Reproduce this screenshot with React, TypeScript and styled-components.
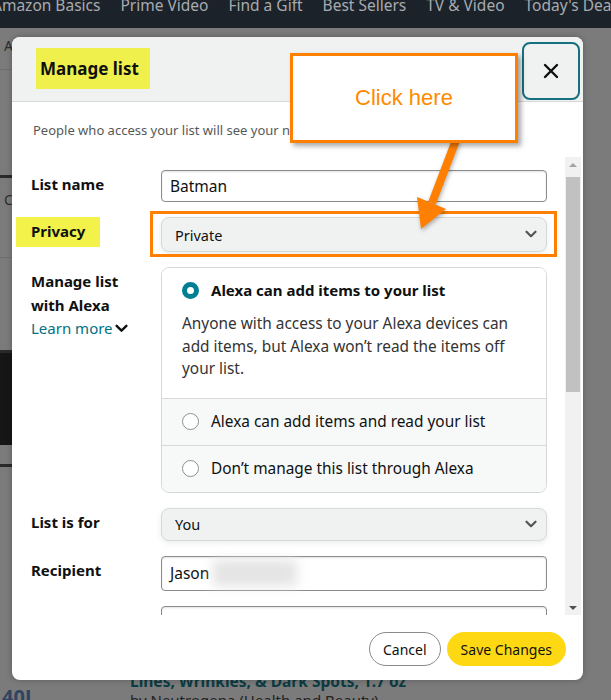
import styled, { createGlobalStyle } from 'styled-components'

const GlobalStyle = createGlobalStyle`
  html, body {
    margin: 0;
    padding: 0;
  }
  body {
    font-family: "Noto Sans", Arial, sans-serif;
    background: #7b7b7b;
  }
  * {
    box-sizing: border-box;
  }
`

const Page = styled.div`
  position: relative;
  width: 611px;
  height: 700px;
  overflow: hidden;
  background: #7b7b7b;
`

const NavBar = styled.div`
  height: 28px;
  background: #1c2229;
  display: flex;
  gap: 20px;
  overflow: hidden;
  white-space: nowrap;
`

const NavItem = styled.span`
  font-size: 15.5px;
  line-height: 16px;
  margin-top: -3px;
  color: #a7abb0;
  &:first-child {
    margin-left: -8px;
  }
`

const Backdrop = styled.div`
  display: flex;
  height: 672px;
`

const LeftRail = styled.div`
  width: 100px;
  display: flex;
  flex-direction: column;
`

const RailText = styled.div<{ $h: number; $top: number }>`
  height: ${(p) => p.$h}px;
  padding-top: ${(p) => p.$top}px;
  padding-left: 4px;
  font-size: 14px;
  color: #2d2d2d;
  border-bottom: 1px solid #6f6f6f;
`

const DarkBlock = styled.div<{ $h: number }>`
  height: ${(p) => p.$h}px;
  background: #161616;
`

const RailGap = styled.div<{ $h: number }>`
  height: ${(p) => p.$h}px;
  border-bottom: 3px solid #2a2a2a;
`

const RailBrand = styled.div`
  margin-top: auto;
  padding-left: 2px;
  font-size: 20px;
  font-weight: 700;
  color: #2f4462;
  line-height: 22px;
  margin-bottom: -8px;
`

const MainCol = styled.div`
  flex: 1;
  display: flex;
  flex-direction: column;
  justify-content: flex-end;
  padding-left: 30px;
  margin-bottom: -10px;
`

const ProductTitle = styled.div`
  font-size: 15.5px;
  font-weight: 700;
  color: #0c3c43;
  line-height: 19px;
`

const ProductBy = styled.div`
  font-size: 15px;
  color: #222;
  line-height: 19px;
`

const Modal = styled.div`
  position: absolute;
  left: 12px;
  top: 37px;
  width: 571px;
  height: 643px;
  background: #fff;
  border-radius: 8px;
  box-shadow: 0 0 6px rgba(0, 0, 0, 0.25);
  display: flex;
  flex-direction: column;
  overflow: hidden;
  color: #0f1111;
`

const Header = styled.div`
  height: 65px;
  flex-shrink: 0;
  background: #f0f2f2;
  border-bottom: 1px solid #d5d9d9;
  display: flex;
  justify-content: space-between;
  align-items: flex-start;
  padding: 0 3px 0 24px;
`

const Title = styled.h2`
  margin: 11px 0 0;
  height: 41px;
  line-height: 41px;
  padding: 0 11px 0 4px;
  background: #eff04b;
  font-size: 17px;
  font-weight: 700;
`

const CloseButton = styled.button`
  margin-top: 5px;
  width: 58px;
  height: 58px;
  border: 2px solid #17707f;
  border-radius: 8px;
  background: #f0f2f2;
  display: flex;
  align-items: center;
  justify-content: center;
  padding: 0;
`

const Subtitle = styled.p`
  margin: 0;
  padding: 19px 21px 0;
  font-size: 13px;
  line-height: 18px;
  color: #565959;
  white-space: nowrap;
`

const ScrollArea = styled.div`
  flex: 1;
  margin: 18px 2px 0 0;
  display: flex;
  min-height: 0;
`

const ScrollContent = styled.div`
  flex: 1;
  overflow: hidden;
  padding: 13px 18px 0 19px;
`

const FormGrid = styled.div`
  display: grid;
  grid-template-columns: 130px 386px;
  row-gap: 15px;
`

const Label = styled.div`
  width: 110px;
  padding-top: 3px;
  font-size: 15px;
  font-weight: 700;
  line-height: 23.5px;
`

const Highlight = styled.span`
  display: inline-block;
  margin-left: -15px;
  padding: 3px 15px 4px;
  line-height: 23px;
  margin-top: -3px;
  background: #f2f24a;
`

const LearnMore = styled.a`
  display: inline-flex;
  align-items: center;
  gap: 2px;
  font-weight: 400;
  color: #007185;
  text-decoration: none;
`

const TextInput = styled.div<{ $h: number }>`
  height: ${(p) => p.$h}px;
  border: 1px solid #888c8c;
  border-radius: 4px;
  box-shadow: inset 0 1px 2px rgba(15, 17, 17, 0.12);
  display: flex;
  align-items: center;
  padding-left: 8px;
  font-size: 15.5px;
  background: #fff;
`

const Blur = styled.span`
  display: inline-block;
  width: 84px;
  height: 26px;
  margin-left: 4px;
  background: #e4e4e4;
  filter: blur(6px);
`

const Select = styled.div<{ $h: number; $marked?: boolean }>`
  position: relative;
  height: ${(p) => p.$h}px;
  border: 1px solid #d5d9d9;
  border-radius: 8px;
  background: #f0f2f2;
  box-shadow: 0 2px 5px rgba(213, 217, 217, 0.5);
  display: flex;
  align-items: center;
  justify-content: space-between;
  padding: 0 9px 0 13px;
  font-size: 14.5px;
  &::after {
    content: '';
    display: ${(p) => (p.$marked ? 'block' : 'none')};
    position: absolute;
    inset: -7px -11px -6px -12px;
    border: 3px solid #ff8000;
  }
`

const RadioGroup = styled.div`
  border: 1px solid #d5d9d9;
  border-radius: 8px;
  overflow: hidden;
  font-size: 15.4px;
`

const SelectedOption = styled.div`
  padding: 11px 20px 17px;
  background: #fff;
`

const OptionRow = styled.div`
  display: flex;
  align-items: center;
  gap: 12px;
  line-height: 22px;
`

const OptionTitle = styled.span<{ $bold?: boolean }>`
  font-weight: ${(p) => (p.$bold ? 700 : 400)};
  font-size: ${(p) => (p.$bold ? '15px' : '15.4px')};
`

const Description = styled.p`
  margin: 12px 0 0;
  line-height: 22.5px;
  color: #333;
`

const Option = styled.div`
  height: 47px;
  border-top: 1px solid #d5d9d9;
  background: #f7f8f8;
  padding: 0 20px;
  display: flex;
  align-items: center;
  gap: 12px;
`

const Radio = styled.span<{ $checked?: boolean }>`
  width: 17px;
  height: 17px;
  flex-shrink: 0;
  border-radius: 50%;
  background: #fff;
  border: ${(p) => (p.$checked ? '5px solid #017f92' : '1px solid #8d9090')};
`

const Scrollbar = styled.div`
  width: 16px;
  background: #f1f1f1;
  display: flex;
  flex-direction: column;
  align-items: center;
`

const ScrollArrow = styled.div<{ $down?: boolean }>`
  height: 15px;
  width: 16px;
  display: flex;
  align-items: center;
  justify-content: center;
  margin-top: ${(p) => (p.$down ? 'auto' : '0')};
  &::before {
    content: '';
    border-left: 4px solid transparent;
    border-right: 4px solid transparent;
    ${(p) => (p.$down ? 'border-top: 4px solid #505050;' : 'border-bottom: 4px solid #a3a3a3;')}
  }
`

const Thumb = styled.div`
  margin-top: 5px;
  width: 14px;
  height: 215px;
  background: #c1c1c1;
`

const Footer = styled.div`
  height: 65px;
  flex-shrink: 0;
  display: flex;
  justify-content: flex-end;
  align-items: flex-start;
  gap: 6px;
  padding: 17px 17px 0 0;
`

const PillButton = styled.button<{ $primary?: boolean }>`
  height: 34px;
  border-radius: 17px;
  padding: 0 13px;
  font-family: inherit;
  font-size: 14px;
  color: #0f1111;
  border: ${(p) => (p.$primary ? '1px solid #ffd814' : '1px solid #888c8c')};
  background: ${(p) => (p.$primary ? '#ffd814' : '#fff')};
`

const Callout = styled.div`
  position: absolute;
  left: 290px;
  top: 53px;
  width: 228px;
  height: 90px;
  background: #fff;
  border: 3px solid #ff8000;
  box-shadow: 3px 3px 5px rgba(0, 0, 0, 0.35);
  display: flex;
  align-items: center;
  justify-content: center;
  font-family: "Liberation Sans", Arial, sans-serif;
  font-size: 22px;
  color: #ff8a00;
`

const ArrowSvg = styled.svg`
  position: absolute;
  left: 400px;
  top: 130px;
  filter: drop-shadow(1px 2px 2px rgba(0, 0, 0, 0.3));
`

function Chevron({ color = '#555', size = 12 }: { color?: string; size?: number }) {
  return (
    <svg width={size} height={size * 0.7} viewBox="0 0 12 8">
      <path d="M1.5 1.5 L6 6 L10.5 1.5" fill="none" stroke={color} strokeWidth="2.2" strokeLinecap="round" strokeLinejoin="round" />
    </svg>
  )
}

export default function App() {
  return (
    <Page>
      <GlobalStyle />
      <NavBar>
        <NavItem>Amazon Basics</NavItem>
        <NavItem>Prime Video</NavItem>
        <NavItem>Find a Gift</NavItem>
        <NavItem>Best Sellers</NavItem>
        <NavItem>TV &amp; Video</NavItem>
        <NavItem>Today's Deals</NavItem>
      </NavBar>

      <Backdrop>
        <LeftRail>
          <RailText $h={42} $top={8}>A</RailText>
          <RailGap $h={108} />
          <RailText $h={80} $top={12}>Create</RailText>
          <RailGap $h={95} />
          <DarkBlock $h={92} />
          <RailGap $h={22} />
          <RailBrand>40L</RailBrand>
        </LeftRail>
        <MainCol>
          <ProductTitle>Lines, Wrinkles, &amp; Dark Spots, 1.7 oz</ProductTitle>
          <ProductBy>by Neutrogena (Health and Beauty)</ProductBy>
        </MainCol>
      </Backdrop>

      <Modal>
        <Header>
          <Title>Manage list</Title>
          <CloseButton aria-label="Close">
            <svg width="16" height="16" viewBox="0 0 16 16">
              <path d="M2 2 L14 14 M14 2 L2 14" stroke="#0f1111" strokeWidth="2.4" strokeLinecap="round" />
            </svg>
          </CloseButton>
        </Header>
        <Subtitle>People who access your list will see your name and list name.</Subtitle>

        <ScrollArea>
          <ScrollContent>
            <FormGrid>
              <Label>List name</Label>
              <TextInput $h={32}>Batman</TextInput>

              <Label>
                <Highlight>Privacy</Highlight>
              </Label>
              <Select $h={35} $marked>
                Private
                <Chevron />
              </Select>

              <Label>
                Manage list with Alexa
                <br />
                <LearnMore href="#">
                  Learn more
                  <Chevron color="#0f1111" size={13} />
                </LearnMore>
              </Label>
              <RadioGroup>
                <SelectedOption>
                  <OptionRow>
                    <Radio $checked />
                    <OptionTitle $bold>Alexa can add items to your list</OptionTitle>
                  </OptionRow>
                  <Description>
                    Anyone with access to your Alexa devices can add items, but Alexa won’t read the items off your list.
                  </Description>
                </SelectedOption>
                <Option>
                  <Radio />
                  <OptionTitle>Alexa can add items and read your list</OptionTitle>
                </Option>
                <Option>
                  <Radio />
                  <OptionTitle>Don’t manage this list through Alexa</OptionTitle>
                </Option>
              </RadioGroup>

              <Label>List is for</Label>
              <Select $h={33}>
                You
                <Chevron />
              </Select>

              <Label>Recipient</Label>
              <TextInput $h={35}>
                Jason
                <Blur />
              </TextInput>

              <Label>Email</Label>
              <TextInput $h={35} />
            </FormGrid>
          </ScrollContent>
          <Scrollbar>
            <ScrollArrow />
            <Thumb />
            <ScrollArrow $down />
          </Scrollbar>
        </ScrollArea>

        <Footer>
          <PillButton>Cancel</PillButton>
          <PillButton $primary>Save Changes</PillButton>
        </Footer>
      </Modal>

      <ArrowSvg width="70" height="110" viewBox="400 130 70 110">
        <line x1="456" y1="140" x2="432" y2="203" stroke="#ff7f00" strokeWidth="8" />
        <polygon points="421,229 417,197 446,209" fill="#ff7f00" />
      </ArrowSvg>
      <Callout>Click here</Callout>
    </Page>
  )
}
